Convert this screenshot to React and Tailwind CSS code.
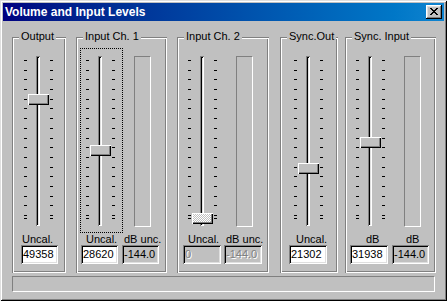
import React from 'react';

const TICKS = [...Array(17)].map((_, i) => Math.round(12 + i * 9.6875)).concat(170);

const groups = [
  {
    title: 'Output',
    box: 'w-[54px]',
    slider: { pos: 'ml-[6px]', top: 46, focus: false, disabled: false },
    meter: false,
    cols: [{ pos: 'ml-[9px] w-[37px]', label: 'Uncal.', pad: 'pl-[1px]', value: '49358', kind: 'edit' }],
  },
  {
    title: 'Input Ch. 1',
    box: 'w-[91px] ml-[10px]',
    slider: { pos: 'ml-[4px]', top: 97, focus: true, disabled: false },
    meter: true,
    cols: [
      { pos: 'ml-[5px] w-[37px]', label: 'Uncal.', pad: 'pl-[5px]', value: '28620', kind: 'edit' },
      { pos: 'ml-[4px] w-[37px]', label: 'dB unc.', pad: 'pl-[2px]', value: '-144.0', kind: 'readonly' },
    ],
  },
  {
    title: 'Input Ch. 2',
    box: 'w-[92px] ml-[10px]',
    slider: { pos: 'ml-[5px]', top: 165, focus: false, disabled: true },
    meter: true,
    cols: [
      { pos: 'ml-[6px] w-[38px]', label: 'Uncal.', pad: 'pl-[5px]', value: '0', kind: 'disabled' },
      { pos: 'ml-[3px] w-[38px]', label: 'dB unc.', pad: 'pl-[2px]', value: '-144.0', kind: 'disabled' },
    ],
  },
  {
    title: 'Sync.Out',
    box: 'w-[58px] ml-[11px]',
    slider: { pos: 'ml-[8px]', top: 115, focus: false, disabled: false },
    meter: false,
    cols: [{ pos: 'ml-[9px] w-[38px]', label: 'Uncal.', pad: 'pl-[7px]', value: '21302', kind: 'edit' }],
  },
  {
    title: 'Sync. Input',
    box: 'w-[91px] ml-[7px]',
    slider: { pos: 'ml-[5px]', top: 89, focus: false, disabled: false },
    meter: true,
    cols: [
      { pos: 'ml-[5px] w-[38px]', label: 'dB', pad: 'pl-[16px]', value: '31938', kind: 'edit' },
      { pos: 'ml-[4px] w-[37px]', label: 'dB', pad: 'pl-[14px]', value: '-144.0', kind: 'readonly' },
    ],
  },
];

const Slider = ({ s }) => (
  <div className={`relative w-[43px] h-[185px] shrink-0 ${s.pos}`}>
    <svg className="absolute inset-0" width="43" height="185" shapeRendering="crispEdges">
      {TICKS.map((y) => (
        <g key={y} fill="#000">
          <rect x="6" y={y} width="3" height="1" />
          <rect x="32" y={y} width="3" height="1" />
        </g>
      ))}
    </svg>
    {/* channel */}
    <div className="relative ml-[18px] mt-[8px] w-[4px] h-[170px] shadow-[inset_1px_1px_#808080,inset_-1px_-1px_#fff,inset_2px_2px_#000,inset_-2px_-2px_#dfdfdf]" />
    {/* thumb */}
    <div
      className={`absolute left-[10px] w-[21px] h-[11px] shadow-[inset_1px_1px_#fff,inset_-1px_-1px_#000,inset_-2px_-2px_#808080] ${
        s.disabled
          ? 'bg-[repeating-conic-gradient(#fff_0_25%,#c0c0c0_0_50%)] bg-[length:2px_2px]'
          : 'bg-[#c0c0c0]'
      }`}
      style={{ top: s.top }}
    />
    {s.focus && <div className="absolute inset-0 border border-dotted border-black" />}
  </div>
);

const Field = ({ value, kind }) => {
  const look =
    kind === 'edit'
      ? 'bg-white text-black'
      : kind === 'readonly'
      ? 'bg-[#c0c0c0] text-black'
      : 'bg-[#c0c0c0] text-[#808080] [text-shadow:1px_1px_0_#fff]';
  return (
    <div
      className={`h-[19px] pl-[2px] pt-[3px] leading-[13px] whitespace-nowrap shadow-[inset_1px_1px_#808080,inset_-1px_-1px_#fff,inset_2px_2px_#000,inset_-2px_-2px_#dfdfdf] ${look}`}
    >
      {value}
    </div>
  );
};

const Group = ({ g }) => (
  <div
    className={`relative h-[236px] shrink-0 pt-[11px] shadow-[inset_1px_1px_#808080,inset_-1px_-1px_#fff,inset_2px_2px_#fff,inset_-2px_-2px_#808080] ${g.box}`}
  >
    <div className="absolute -top-[7px] left-[7px] px-[2px] bg-[#c0c0c0] leading-[13px] whitespace-nowrap">
      {g.title}
    </div>
    <div className="flex items-start">
      <Slider s={g.slider} />
      {g.meter && (
        <div className="ml-[11px] mt-[8px] w-[17px] h-[171px] border border-t-[#808080] border-l-[#808080] border-r-white border-b-white" />
      )}
    </div>
    <div className="flex">
      {g.cols.map((c, i) => (
        <div key={i} className={`flex flex-col shrink-0 ${c.pos}`}>
          <div className={`h-[12px] leading-[12px] whitespace-nowrap ${c.pad}`}>{c.label}</div>
          <Field value={c.value} kind={c.kind} />
        </div>
      ))}
    </div>
  </div>
);

export default function App() {
  return (
    <div className="w-[447px] h-[301px] p-[3px] bg-[#c0c0c0] text-[11px] text-black [font-family:'Liberation_Sans',Arial,sans-serif] shadow-[inset_1px_1px_#dfdfdf,inset_-1px_-1px_#000,inset_2px_2px_#fff,inset_-2px_-2px_#808080] overflow-hidden">
      {/* Title bar */}
      <div className="flex items-center justify-between h-[18px] bg-gradient-to-r from-[#000080] to-[#1084d0]">
        <span className="pl-[2px] text-[12px] font-bold text-white leading-[14px]">Volume and Input Levels</span>
        <button className="flex items-start w-[16px] h-[14px] mr-[2px] pl-[4px] pt-[3px] bg-[#c0c0c0] shadow-[inset_-1px_-1px_#000,inset_1px_1px_#fff,inset_-2px_-2px_#808080,inset_2px_2px_#dfdfdf]">
          <svg width="8" height="7" viewBox="0 0 8 7" shapeRendering="crispEdges">
            <path
              fill="#000"
              d="M0 0h2v1H0zM6 0h2v1H6zM1 1h2v1H1zM5 1h2v1H5zM2 2h4v1H2zM3 3h2v1H3zM2 4h4v1H2zM1 5h2v1H1zM5 5h2v1H5zM0 6h2v1H0zM6 6h2v1H6z"
            />
          </svg>
        </button>
      </div>

      {/* Body */}
      <div className="pl-[9px] pt-[16px]">
        <div className="flex">
          {groups.map((g) => (
            <Group key={g.title} g={g} />
          ))}
        </div>
        <div className="mt-[3px] w-[423px] h-[16px] border border-t-[#808080] border-l-[#808080] border-r-white border-b-white" />
      </div>
    </div>
  );
}
